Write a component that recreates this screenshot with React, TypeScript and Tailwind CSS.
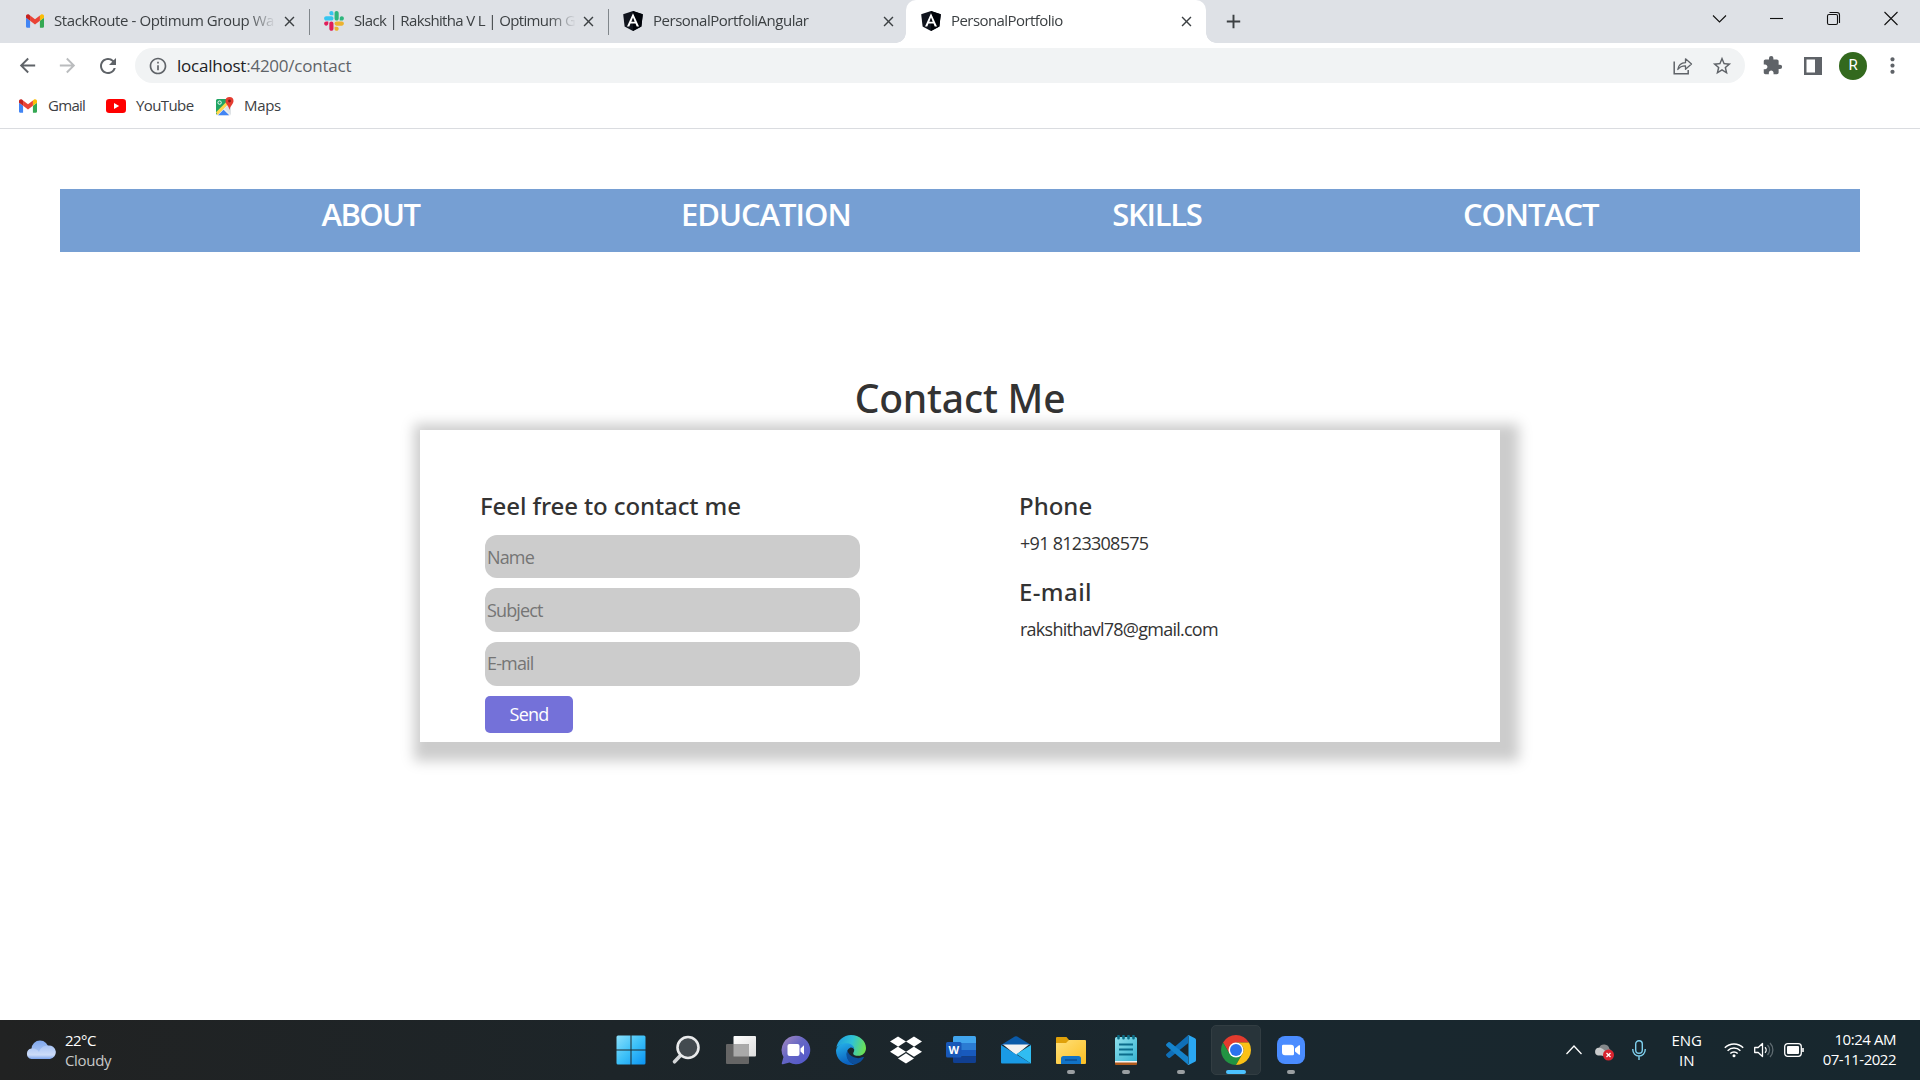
import React from "react";
import { FaDropbox } from "react-icons/fa";
import {
  MdAdd,
  MdArrowBack,
  MdArrowForward,
  MdClose,
  MdExtension,
  MdInfoOutline,
  MdMoreVert,
  MdRefresh,
  MdStarBorder,
} from "react-icons/md";

/* ---------- brand icons ---------- */

const Gmail = () => (
  <svg viewBox="52 42 88 66" className="h-[14px] w-[18px] shrink-0">
    <path fill="#4285f4" d="M58 108h14V74L52 59v43c0 3.32 2.69 6 6 6" />
    <path fill="#34a853" d="M120 108h14c3.32 0 6-2.69 6-6V59l-20 15" />
    <path fill="#fbbc04" d="M120 48v26l20-15v-8c0-7.42-8.47-11.65-14.4-7.2" />
    <path fill="#ea4335" d="M72 74V48l24 18 24-18v26L96 92" />
    <path fill="#c5221f" d="M52 51v8l20 15V48l-5.6-4.2c-5.94-4.45-14.4-.22-14.4 7.2" />
  </svg>
);

const Slack = () => (
  <svg viewBox="0 0 127 127" className="size-[20px] shrink-0">
    <path fill="#E01E5A" d="M27.2 80c0 7.3-5.9 13.2-13.2 13.2C6.7 93.2.8 87.3.8 80c0-7.3 5.9-13.2 13.2-13.2h13.2V80zm6.6 0c0-7.3 5.9-13.2 13.2-13.2 7.3 0 13.2 5.9 13.2 13.2v33c0 7.3-5.9 13.2-13.2 13.2-7.3 0-13.2-5.9-13.2-13.2V80z" />
    <path fill="#36C5F0" d="M47 27c-7.3 0-13.2-5.9-13.2-13.2C33.8 6.5 39.7.6 47 .6c7.3 0 13.2 5.9 13.2 13.2V27H47zm0 6.7c7.3 0 13.2 5.9 13.2 13.2 0 7.3-5.9 13.2-13.2 13.2H13.9C6.6 60.1.7 54.2.7 46.9c0-7.3 5.9-13.2 13.2-13.2H47z" />
    <path fill="#2EB67D" d="M99.9 46.9c0-7.3 5.9-13.2 13.2-13.2 7.3 0 13.2 5.9 13.2 13.2 0 7.3-5.9 13.2-13.2 13.2H99.9V46.9zm-6.6 0c0 7.3-5.9 13.2-13.2 13.2-7.3 0-13.2-5.9-13.2-13.2V13.8C66.9 6.5 72.8.6 80.1.6c7.3 0 13.2 5.9 13.2 13.2v33.1z" />
    <path fill="#ECB22E" d="M80.1 99.8c7.3 0 13.2 5.9 13.2 13.2 0 7.3-5.9 13.2-13.2 13.2-7.3 0-13.2-5.9-13.2-13.2V99.8h13.2zm0-6.6c-7.3 0-13.2-5.9-13.2-13.2 0-7.3 5.9-13.2 13.2-13.2h33.1c7.3 0 13.2 5.9 13.2 13.2 0 7.3-5.9 13.2-13.2 13.2H80.1z" />
  </svg>
);

const Angular = () => (
  <svg viewBox="0 0 20 20" className="size-[20px] shrink-0">
    <path fill="#10141d" d="M10 0 19.8 3.3 18.4 15.5 10 20 1.6 15.5.2 3.3z" />
    <path fill="#000309" d="M10 0 19.8 3.3 18.4 15.5 10 20z" />
    <path fill="#fff" fillRule="evenodd" d="M10 2.3 4 15.6h2.3l1.2-3h5l1.2 3H16L10 2.3zm0 4.3 1.7 4.1H8.3L10 6.6z" />
  </svg>
);

const YouTube = () => (
  <svg viewBox="0 0 20 14" className="h-[14px] w-[20px] shrink-0">
    <rect width="20" height="14" rx="3.2" fill="#f00" />
    <path fill="#fff" d="m8 4 5.2 3L8 10z" />
  </svg>
);

const Maps = () => (
  <svg viewBox="0 0 19 19" className="size-[19px] shrink-0">
    <rect x="1" y="3" width="15" height="15.5" rx="1.5" fill="#eceff1" />
    <path fill="#1fa463" d="M2.5 2H13v4.500L2 17.500A1 1 0 0 1 1 16.500V3.500A1.500 1.500 0 0 1 2.500 2z" />
    <path fill="#ffd54a" d="m1 15.200 11-11 1.800 2.400L2.500 18z" />
    <path fill="#4285f4" d="m3 18.300 5.600-5.600 5.600 5.600z" />
    <path fill="#dfe3e6" d="m9.500 11.700 3.500-3.500 3 3v6.500z" />
    <circle cx="4.600" cy="5.600" r="1.700" fill="none" stroke="#fff" strokeWidth=".9" />
    <path fill="#e53c30" d="M14.500 0a4 4 0 0 1 4 4c0 3-3.200 4.400-4 9-.800-4.600-4-6-4-9a4 4 0 0 1 4-4z" />
    <circle cx="14.500" cy="4" r="1.400" fill="#801d17" />
  </svg>
);

/* ---------- browser ---------- */

type TabProps = { icon: React.ReactNode; title: string; track: string };

const TabBody = ({ icon, title, track }: TabProps) => (
  <>
    {icon}
    <span
      className={`-mt-[2px] ml-[10px] w-[222px] overflow-hidden text-[15px] leading-[22px] whitespace-nowrap text-[#3c4043] ${track} [mask-image:linear-gradient(to_right,black_194px,transparent_222px)]`}
    >
      {title}
    </span>
    <MdClose className="ml-[5px] size-[17px] shrink-0 text-[#3c4043]" />
  </>
);

const TabStrip = () => (
  <div className="flex h-[43px] bg-[#dee1e6]">
    <div className="flex h-[43px] w-[298px] items-center pb-[1px] pl-[26px]">
      <TabBody icon={<Gmail />} title="StackRoute - Optimum Group Wa" track="tracking-[-0.42px]" />
    </div>
    <div className="mt-[9px] ml-[11px] h-[26px] w-px shrink-0 bg-[#80868b]" />
    <div className="flex h-[43px] w-[287px] items-center pb-[1px] pl-[14px]">
      <TabBody icon={<Slack />} title="Slack | Rakshitha V L | Optimum G" track="tracking-[-0.64px]" />
    </div>
    <div className="mt-[9px] ml-[11px] h-[26px] w-px shrink-0 bg-[#80868b]" />
    <div className="flex h-[43px] w-[297px] items-center pb-[1px] pl-[14px]">
      <TabBody icon={<Angular />} title="PersonalPortfoliAngular" track="tracking-[-0.48px]" />
    </div>
    <div className="relative flex h-[43px] w-[300px] items-center rounded-t-[10px] bg-white pb-[1px] pl-[15px]">
      <span className="absolute bottom-0 -left-[10px] size-[10px] bg-[radial-gradient(circle_at_0_0,#dee1e6_9.500px,#fff_10px)]" />
      <span className="absolute -right-[10px] bottom-0 size-[10px] bg-[radial-gradient(circle_at_100%_0,#dee1e6_9.500px,#fff_10px)]" />
      <TabBody icon={<Angular />} title="PersonalPortfolio" track="tracking-[-0.56px]" />
    </div>
    <div className="flex w-[55px] items-center justify-center">
      <MdAdd className="size-[23px] text-[#3c4043]" />
    </div>
    <svg viewBox="0 0 200 20" className="mt-[9px] mr-[13px] ml-auto h-[20px] w-[200px]" fill="none" stroke="#111" strokeWidth="1.100">
      <path d="m6 6.500 6.500 6.500L19 6.500" />
      <path d="M63 9.500h13" />
      <rect x="120.500" y="5.500" width="10" height="10" rx="1.500" />
      <path d="M122.500 3.500h7.500a2.500 2.500 0 0 1 2.500 2.500v8" />
      <path d="m177.500 3 13 13m0-13-13 13" />
    </svg>
  </div>
);

const Toolbar = () => (
  <div className="flex h-[45px] items-center text-[#5f6368]">
    <MdArrowBack className="ml-[16px] size-[23px]" />
    <MdArrowForward className="ml-[17px] size-[23px] text-[#babcbe]" />
    <MdRefresh className="ml-[17px] size-[24px]" />
    <div className="ml-[15px] flex h-[35px] w-[1610px] items-center rounded-full bg-[#f1f3f4]">
      <MdInfoOutline className="ml-[13px] size-[20px]" />
      <span className="ml-[9px] text-[17px] leading-[24px] tracking-[-0.230px] text-[#5f6368]">
        <span className="text-[#202124]">localhost</span>:4200/contact
      </span>
      <svg viewBox="0 0 20 18" className="mr-[18px] ml-auto h-[18px] w-[20px]" fill="none" stroke="#5f6368" strokeWidth="1.500">
        <path d="M1.200 4.500v12.300h14V13" />
        <path d="M4.800 12.500c.6-4 3.200-6.600 7.700-6.800V1.800L18.500 7l-6 5.200V8.800c-3.500-.1-5.800 1-7.700 3.700z" strokeLinejoin="round" strokeWidth="1.300" />
      </svg>
      <MdStarBorder className="mr-[12px] size-[22px]" />
    </div>
    <MdExtension className="ml-[17px] size-[21px]" />
    <svg viewBox="0 0 18 18" className="ml-[21px] size-[18px]">
      <path fill="#5f6368" fillRule="evenodd" d="M0 0h18v18H0zM2.500 2.500v13H11v-13z" />
    </svg>
    <div className="ml-[17px] flex size-[28px] items-center justify-center rounded-full bg-[#33691e] font-['Roboto'] text-[15px] text-white">
      R
    </div>
    <MdMoreVert className="ml-[13px] size-[25px]" />
  </div>
);

const Bookmarks = () => (
  <div className="flex h-[41px] items-center border-b border-[#dadce0] pb-[4px] pl-[19px] text-[15px] leading-[22px] text-[#3c4043]">
    <Gmail />
    <span className="-mt-[2px] ml-[11px] w-[58px] tracking-[-0.700px]">Gmail</span>
    <YouTube />
    <span className="-mt-[2px] ml-[10px] w-[79px] tracking-[-0.600px]">YouTube</span>
    <Maps />
    <span className="-mt-[2px] ml-[10px] tracking-[-0.330px]">Maps</span>
  </div>
);

/* ---------- portfolio page ---------- */

const inputClass =
  "ml-[5px] block w-[375px] rounded-[12px] bg-[#ccc] pl-[2px] text-[18px] tracking-[-0.850px] text-[#333] placeholder:text-[#757575] placeholder:opacity-100";

const Page = () => (
  <main className="h-[891px] pt-[60px] text-[#333]">
    <nav className="mx-[60px] flex h-[63px] justify-evenly bg-[#769fd3] text-[31px] leading-[51px] font-semibold text-white">
      <a className="tracking-[-1.600px]">ABOUT</a>
      <a className="tracking-[-1px]">EDUCATION</a>
      <a className="tracking-[-1.300px]">SKILLS</a>
      <a className="tracking-[-1.150px]">CONTACT</a>
    </nav>
    <h1 className="mt-[119px] text-center font-['Noto_Sans',sans-serif] text-[39px] leading-[54px] font-medium tracking-[-0.200px]">
      Contact Me
    </h1>
    <section className="mx-auto mt-[5px] grid h-[312px] w-[1080px] grid-cols-[540px_480px] bg-white pt-[60px] pl-[60px] shadow-[6.25px_6.25px_12.5px_12.5px_#ccc]">
      <form>
        <h2 className="h-8 font-['Noto_Sans',sans-serif] text-[24px] leading-8 font-medium tracking-[-0.100px]">
          Feel free to contact me
        </h2>
        <input placeholder="Name" className={`${inputClass} mt-[13px] h-[43px]`} />
        <input placeholder="Subject" className={`${inputClass} mt-[10px] h-[44px]`} />
        <input placeholder="E-mail" className={`${inputClass} mt-[10px] h-[44px] pb-[2px]`} />
        <button
          type="button"
          className="mt-[10px] ml-[5px] block h-[37px] w-[88px] rounded-[5px] bg-[#7471d9] pb-[1px] text-[18px] leading-[35px] tracking-[-0.800px] text-white"
        >
          Send
        </button>
      </form>
      <div>
        <h2 className="-ml-px h-8 font-['Noto_Sans',sans-serif] text-[24px] leading-8 font-medium">Phone</h2>
        <p className="mt-2 text-[18px] leading-[26px] tracking-[-0.720px]">+91 8123308575</p>
        <h2 className="mt-5 -ml-px font-['Noto_Sans',sans-serif] text-[24px] leading-[31px] font-medium tracking-[0.400px]">
          E-mail
        </h2>
        <p className="mt-[9px] text-[18px] leading-[27px] tracking-[-0.750px]">rakshithavl78@gmail.com</p>
      </div>
    </section>
  </main>
);

/* ---------- taskbar ---------- */

const icon30 = "size-[30px]";

const Start = () => (
  <svg viewBox="0 0 30 30" className={icon30}>
    <defs>
      <linearGradient id="win" x1="0" y1="0" x2="1" y2="1">
        <stop offset="0" stopColor="#8be0fb" />
        <stop offset=".5" stopColor="#3cc0f8" />
        <stop offset="1" stopColor="#0a93f2" />
      </linearGradient>
    </defs>
    <path fill="url(#win)" d="M2 .500h12.500v14H.500V2A1.500 1.500 0 0 1 2 .500zm13.500 0H28A1.500 1.500 0 0 1 29.500 2v12.500h-14zM.500 15.500h14v14H2A1.500 1.500 0 0 1 .500 28zm15 0h14V28a1.500 1.500 0 0 1-1.500 1.500H15.500z" />
  </svg>
);

const Search = () => (
  <svg viewBox="0 0 30 30" className={icon30}>
    <path d="M9 21 3.500 26.800" stroke="#d4d6d8" strokeWidth="3.600" strokeLinecap="round" />
    <circle cx="17" cy="12.500" r="10.500" fill="#434a4f" stroke="#e9eaeb" strokeWidth="2.600" />
  </svg>
);

const TaskView = () => (
  <svg viewBox="0 0 30 30" className={icon30}>
    <defs>
      <linearGradient id="tv" x1="0" y1="0" x2="1" y2="1">
        <stop offset="0" stopColor="#fff" />
        <stop offset="1" stopColor="#dcdcdc" />
      </linearGradient>
    </defs>
    <rect x="7.500" y="1" width="22.500" height="20.500" rx="1" fill="url(#tv)" />
    <rect x="0" y="9" width="23" height="20" rx="1" fill="#656565" />
    <path fill="#a9a9a9" d="M7.500 9H22a1 1 0 0 1 1 1v11.500H7.500z" />
  </svg>
);

const Chat = () => (
  <svg viewBox="0 0 30 30" className={icon30}>
    <defs>
      <linearGradient id="chat" x1="0" y1="0" x2="1" y2="1">
        <stop offset="0" stopColor="#a98bc0" />
        <stop offset=".45" stopColor="#6566c4" />
        <stop offset="1" stopColor="#4f55cc" />
      </linearGradient>
    </defs>
    <path fill="url(#chat)" d="M15 .800a14.200 14.200 0 1 1-6.500 26.800L2 29.300a1 1 0 0 1-1.200-1.200L2.500 22A14.200 14.200 0 0 1 15 .800z" />
    <rect x="6.500" y="9" width="12" height="12" rx="2" fill="#fff" />
    <path fill="#fff" d="m19.500 13.500 3.500-3.200v9.400l-3.500-3.200z" />
  </svg>
);

const Edge = () => (
  <svg viewBox="0 0 30 30" className={icon30}>
    <defs>
      <linearGradient id="edgeTop" x1="0" y1=".4" x2="1" y2=".6">
        <stop offset="0" stopColor="#1f9fe0" />
        <stop offset=".5" stopColor="#30c3d5" />
        <stop offset="1" stopColor="#6fe34c" />
      </linearGradient>
      <linearGradient id="edgeLeft" x1="0" y1="0" x2=".3" y2="1">
        <stop offset="0" stopColor="#25b2ea" />
        <stop offset="1" stopColor="#0b62c0" />
      </linearGradient>
    </defs>
    <path fill="url(#edgeTop)" d="M.300 13C1.500 5.500 7.500 0 15 0c8.500 0 15 6 15 13 0 5-3.700 7.800-7.600 7.800-3.300 0-5.200-1.200-5.200-2.400 0-.9 1-1.400 1-3.400 0-3.500-3.400-6-7.700-6C6 9 2 10.500.300 13z" />
    <path fill="url(#edgeLeft)" d="M0 15.500C.500 10.800 5 8.200 10.500 8.200c4.500 0 7.700 2.600 7.700 6.300-.8-1.500-2.400-2.300-4-1.800-3 1-3.700 4.800-3.200 8 .7 4.500 4 8 8 8.700C9 32 0 25 0 15.500z" />
    <path fill="#0c4f9c" d="M11.500 15.500C9 20 11 28 19 29.400c4-1 7-3.400 8.800-6.600.3-.7-.3-1-.9-.7-3 1.400-6.300 1.300-9 .2-3.500-1.300-6-3.900-6.400-6.800z" />
  </svg>
);

const Word = () => (
  <svg viewBox="0 0 30 30" className={icon30}>
    <path fill="#41a5ee" d="M7 2.500A1.500 1.500 0 0 1 8.500 1h20A1.500 1.500 0 0 1 30 2.500V8H7z" />
    <path fill="#2b7cd3" d="M7 8h23v7H7z" />
    <path fill="#185abd" d="M7 15h23v6.500H7z" />
    <path fill="#103f91" d="M7 21.500h23v5a1.500 1.500 0 0 1-1.500 1.500h-20A1.500 1.500 0 0 1 7 26.500z" />
    <rect x="0" y="7" width="15.500" height="15.500" rx="1.500" fill="#1858b8" />
    <text x="7.800" y="18.600" textAnchor="middle" fill="#fff" fontFamily="Open Sans, sans-serif" fontWeight="700" fontSize="11">
      W
    </text>
  </svg>
);

const Mail = () => (
  <svg viewBox="0 0 30 30" className={icon30}>
    <path fill="#0a5aa8" d="M0 10 13.800 1.500a2.300 2.300 0 0 1 2.400 0L30 10z" />
    <path fill="#f2f2f2" d="M2 9.500h26L15 20z" />
    <path fill="#1a9be6" d="M0 10l30 18.500H1A1 1 0 0 1 0 27.500z" />
    <path fill="#30bdf2" d="M30 10v18.500L15.500 19z" />
  </svg>
);

const Folder = () => (
  <svg viewBox="0 0 30 30" className={icon30}>
    <defs>
      <linearGradient id="fold" x1="0" y1="0" x2="1" y2="1">
        <stop offset="0" stopColor="#ffe07a" />
        <stop offset="1" stopColor="#fcbf22" />
      </linearGradient>
    </defs>
    <path fill="#e0a10a" d="M0 3a1 1 0 0 1 1-1h9.500L13 5v5H0z" />
    <path fill="url(#fold)" d="M0 8h10l3-3h16a1 1 0 0 1 1 1v22a1 1 0 0 1-1 1H1a1 1 0 0 1-1-1z" />
    <path fill="#1173c7" d="M5 29v-5.500A2.500 2.500 0 0 1 7.500 21h15a2.500 2.500 0 0 1 2.500 2.500V29z" />
    <path d="M9 25h12" stroke="#0a4a8c" strokeWidth="1.300" />
  </svg>
);

const Notepad = () => (
  <svg viewBox="0 0 30 30" className={icon30}>
    <defs>
      <linearGradient id="note" x1="0" y1="0" x2="1" y2="1">
        <stop offset="0" stopColor="#8fe0ec" />
        <stop offset="1" stopColor="#38b5d3" />
      </linearGradient>
    </defs>
    <path fill="#b05a1c" d="M4 25h22v4a1 1 0 0 1-1 1H5a1 1 0 0 1-1-1z" />
    <path fill="#f2f2f2" d="M4 24h22v3.500H4z" />
    <path fill="url(#note)" d="M4 3.500A1.500 1.500 0 0 1 5.500 2h19A1.500 1.500 0 0 1 26 3.500V26H4z" />
    <path d="M7.500 1v2.200M12.500 1v2.200M17.500 1v2.200M22.500 1v2.200" stroke="#0d6d86" strokeWidth="2.600" strokeLinecap="round" />
    <path d="M8 9.500h14M8 14.500h14M8 19.500h14" stroke="#0b6c8c" strokeWidth="1.800" />
  </svg>
);

const VSCode = () => (
  <svg viewBox="0 0 30 30" className={icon30}>
    <path fill="#0f6fb8" d="M.700 18.800 22 .300V8.300L4 22.700a1.300 1.300 0 0 1-1.700 0L.700 21.200a1.600 1.600 0 0 1 0-2.400z" />
    <path fill="#1583cc" d="M.700 11.200 22 29.700v-8L4 7.300a1.300 1.300 0 0 0-1.700 0L.700 8.800a1.600 1.600 0 0 0 0 2.400z" />
    <path fill="#2aa7f2" d="M21.600.300a1.500 1.500 0 0 1 1.400 0l6 2.900c.6.300 1 .9 1 1.600v20.400c0 .7-.4 1.300-1 1.600l-6 2.900a1.500 1.500 0 0 1-1.400 0c.6 0 .9-.5.9-1.200V1.500c0-.7-.3-1.200-.9-1.200z" />
  </svg>
);

const Chrome = () => (
  <svg viewBox="0 0 48 48" className={icon30}>
    <path fill="#e33b2e" d="M3.220 12A24 24 0 0 1 44.780 12L24 12 13.610 30z" />
    <path fill="#229342" d="M3.220 12A24 24 0 0 0 24 48L34.390 30 24 36 13.610 30z" />
    <path fill="#fbc116" d="M44.780 12A24 24 0 0 1 24 48L34.390 30A12 12 0 0 0 24 12z" />
    <circle cx="24" cy="24" r="12" fill="#fff" />
    <circle cx="24" cy="24" r="9.600" fill="#2b72ee" />
  </svg>
);

const Zoom = () => (
  <svg viewBox="0 0 30 30" className={icon30}>
    <rect x="1" y="1" width="28" height="28" rx="8" fill="#4a8cff" />
    <path fill="#fff" d="M6 11a1.200 1.200 0 0 1 1.200-1.200H15a3 3 0 0 1 3 3V19a1.200 1.200 0 0 1-1.200 1.200H9a3 3 0 0 1-3-3zM19 13.500l4-3.200a.6.6 0 0 1 1 .5v8.400a.6.6 0 0 1-1 .5l-4-3.200z" />
  </svg>
);

const apps: { name: string; icon: React.ReactNode; state?: "open" | "active" }[] = [
  { name: "start", icon: <Start /> },
  { name: "search", icon: <Search /> },
  { name: "taskview", icon: <TaskView /> },
  { name: "chat", icon: <Chat /> },
  { name: "edge", icon: <Edge /> },
  { name: "dropbox", icon: <FaDropbox className="size-[32px] shrink-0 text-white" /> },
  { name: "word", icon: <Word /> },
  { name: "mail", icon: <Mail /> },
  { name: "files", icon: <Folder />, state: "open" },
  { name: "notepad", icon: <Notepad />, state: "open" },
  { name: "vscode", icon: <VSCode />, state: "open" },
  { name: "chrome", icon: <Chrome />, state: "active" },
  { name: "zoom", icon: <Zoom />, state: "open" },
];

const Taskbar = () => (
  <footer className="grid h-[60px] grid-cols-[603px_715px_602px] bg-[linear-gradient(to_right,#212222,#1d2529_32%,#1a272e_60%,#17272e)] text-[15px] leading-[20px] text-white">
    <div className="flex items-center pl-[26px]">
      <svg viewBox="0 0 30 20" className="h-[20px] w-[30px]">
        <defs>
          <linearGradient id="cloudBack" x1="0" y1="0" x2="0" y2="1">
            <stop offset="0" stopColor="#80a8ee" />
            <stop offset="1" stopColor="#b9d0f7" />
          </linearGradient>
          <linearGradient id="cloudFront" x1="0" y1="0" x2="0" y2="1">
            <stop offset="0" stopColor="#a8c4f5" />
            <stop offset=".7" stopColor="#cddcf8" />
            <stop offset="1" stopColor="#7ea6ee" />
          </linearGradient>
        </defs>
        <circle cx="14" cy="9" r="8.500" fill="url(#cloudBack)" />
        <path fill="url(#cloudFront)" d="M5.500 19A5.300 5.300 0 0 1 5.500 8.500C9 8 11.500 9.500 13 12c1.500-4.500 5-6.500 9-6.500a6.800 6.800 0 0 1 2 13.500z" />
      </svg>
      <div className="ml-[9px]">
        <div className="tracking-[-0.530px]">22°C</div>
        <div className="tracking-[-0.330px] text-[#c8c8c8]">Cloudy</div>
      </div>
    </div>

    <div className="flex items-center">
      {apps.map((a) => (
        <div
          key={a.name}
          className={
            a.state === "active"
              ? "relative mx-[2.5px] flex size-[50px] items-center justify-center rounded-[5px] border border-[#323d42] bg-[#28343a]"
              : "relative mx-[2.5px] flex size-[50px] items-center justify-center"
          }
        >
          {a.icon}
          {a.state === "active" && <span className="absolute bottom-0 h-[4px] w-[20px] rounded-full bg-[#4cc2ff]" />}
          {a.state === "open" && <span className="absolute bottom-[1px] h-[4px] w-[8px] rounded-full bg-[#9a9fa2]" />}
        </div>
      ))}
    </div>

    <div className="flex items-center justify-end pr-[24px]">
      <svg viewBox="0 0 16 10" className="h-[10px] w-[16px]" fill="none" stroke="#fff" strokeWidth="1.300">
        <path d="m.5 9 7.500-8 7.500 8" />
      </svg>
      <svg viewBox="0 0 20 18" className="mt-[3px] ml-[12px] h-[18px] w-[20px]">
        <path fill="#85888a" d="M5 5a5.500 5.500 0 0 1 10.500 1A4 4 0 0 1 16 13H8z" />
        <path fill="#c9cbcc" d="M4 12.500A4 4 0 0 1 4 4.800c2-.3 4 .2 5.500 1.700L14 10v2.500z" />
        <circle cx="14.500" cy="12" r="5.500" fill="#d9242f" />
        <path d="m12.500 10 4 4m0-4-4 4" stroke="#fff" strokeWidth="1.300" />
      </svg>
      <svg viewBox="0 0 14 20" className="ml-[18px] h-[20px] w-[14px]" fill="none" stroke="#7fd0ee" strokeWidth="1.400">
        <rect x="3.700" y=".8" width="6.600" height="12.400" rx="3.300" />
        <path d="M.800 9v.8a6.200 6.200 0 0 0 12.400 0V9M7 16v4" />
      </svg>
      <div className="ml-[25px] w-[32px] text-center">
        <div className="tracking-[-0.060px]">ENG</div>
        <div>IN</div>
      </div>
      <svg viewBox="0 0 20 16" className="ml-[21px] h-[16px] w-[20px]" fill="none" stroke="#fff" strokeWidth="1.500">
        <path d="M.800 5.800a13 13 0 0 1 18.400 0M3.600 8.700a9 9 0 0 1 12.800 0M6.300 11.500a5.200 5.200 0 0 1 7.400 0" />
        <circle cx="10" cy="13.800" r="1.500" fill="#fff" stroke="none" />
      </svg>
      <svg viewBox="0 0 20 16" className="ml-[10px] h-[16px] w-[20px]" fill="none" stroke="#fff" strokeWidth="1.300">
        <path d="M.700 5.500h3.500L8.500 1.500v13l-4.300-4H.700z" strokeLinejoin="round" />
        <path d="M11 5.200a4 4 0 0 1 0 5.600" />
        <path d="M13.500 3a7 7 0 0 1 0 10M16 1a10 10 0 0 1 0 14" stroke="#5f6b71" />
      </svg>
      <svg viewBox="0 0 20 14" className="ml-[10px] h-[14px] w-[20px]">
        <rect x=".7" y=".7" width="16.600" height="12.600" rx="3" fill="none" stroke="#fff" strokeWidth="1.300" />
        <rect x="3" y="3" width="12" height="8" rx="1" fill="#fff" />
        <path d="M19 5v4" stroke="#fff" strokeWidth="1.600" />
      </svg>
      <div className="-mt-[2px] ml-[19px] text-right">
        <div className="tracking-[-0.450px]">10:24 AM</div>
        <div className="tracking-[-0.500px]">07-11-2022</div>
      </div>
    </div>
  </footer>
);

export default function App() {
  return (
    <div className="h-[1080px] w-[1920px] overflow-hidden bg-white font-['Open_Sans',sans-serif]">
      <TabStrip />
      <Toolbar />
      <Bookmarks />
      <Page />
      <Taskbar />
    </div>
  );
}
